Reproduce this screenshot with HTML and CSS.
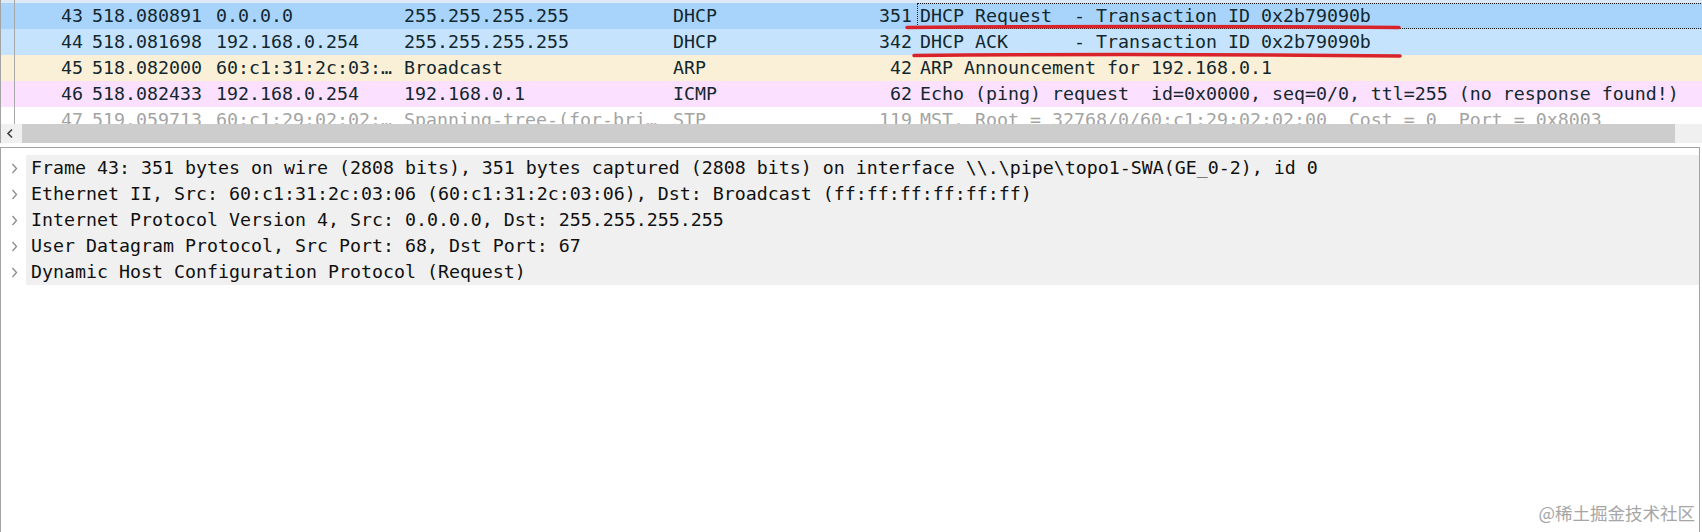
FILE: index.html
```html
<!DOCTYPE html>
<html lang="zh-CN">
<head>
<meta charset="utf-8">
<title>Wireshark</title>
<link rel="stylesheet" href="styles.css">
</head>
<body>
<div class="app">
  <section class="packet-list">
    <div class="related-line"></div>
    <div class="top-strip"></div>
    <div class="row sel">
      <span class="c no">43</span><span class="c time">518.080891</span><span class="c src">0.0.0.0</span><span class="c dst">255.255.255.255</span><span class="c proto">DHCP</span><span class="c len">351</span><span class="c info focus">DHCP Request  - Transaction ID 0x2b79090b</span>
    </div>
    <div class="row udp">
      <span class="c no">44</span><span class="c time">518.081698</span><span class="c src">192.168.0.254</span><span class="c dst">255.255.255.255</span><span class="c proto">DHCP</span><span class="c len">342</span><span class="c info">DHCP ACK      - Transaction ID 0x2b79090b</span>
    </div>
    <div class="row arp">
      <span class="c no">45</span><span class="c time">518.082000</span><span class="c src">60:c1:31:2c:03:…</span><span class="c dst">Broadcast</span><span class="c proto">ARP</span><span class="c len">42</span><span class="c info">ARP Announcement for 192.168.0.1</span>
    </div>
    <div class="row icmp">
      <span class="c no">46</span><span class="c time">518.082433</span><span class="c src">192.168.0.254</span><span class="c dst">192.168.0.1</span><span class="c proto">ICMP</span><span class="c len">62</span><span class="c info">Echo (ping) request  id=0x0000, seq=0/0, ttl=255 (no response found!)</span>
    </div>
    <div class="row-cut">
      <div class="row stp">
        <span class="c no">47</span><span class="c time">519.059713</span><span class="c src">60:c1:29:02:02:…</span><span class="c dst">Spanning-tree-(for-bri…</span><span class="c proto">STP</span><span class="c len">119</span><span class="c info">MST. Root = 32768/0/60:c1:29:02:02:00  Cost = 0  Port = 0x8003</span>
      </div>
    </div>
    <div class="hscroll">
      <div class="sb-arrow">
        <svg width="8" height="11" viewBox="0 0 8 11"><polyline points="6,1.5 2,5.5 6,9.5" fill="none" stroke="#3c3c3c" stroke-width="1.6"/></svg>
      </div>
      <div class="sb-thumb"></div>
      <div class="sb-rest"></div>
    </div>
  </section>

  <div class="splitter"></div>

  <section class="details">
    <div class="drow"><span class="exp"><svg width="7" height="11" viewBox="0 0 7 11"><polyline points="1.5,1 5.5,5.5 1.5,10" fill="none" stroke="#8c8c8c" stroke-width="1.3"/></svg></span><span class="dtext">Frame 43: 351 bytes on wire (2808 bits), 351 bytes captured (2808 bits) on interface \\.\pipe\topo1-SWA(GE_0-2), id 0</span></div>
    <div class="drow"><span class="exp"><svg width="7" height="11" viewBox="0 0 7 11"><polyline points="1.5,1 5.5,5.5 1.5,10" fill="none" stroke="#8c8c8c" stroke-width="1.3"/></svg></span><span class="dtext">Ethernet II, Src: 60:c1:31:2c:03:06 (60:c1:31:2c:03:06), Dst: Broadcast (ff:ff:ff:ff:ff:ff)</span></div>
    <div class="drow"><span class="exp"><svg width="7" height="11" viewBox="0 0 7 11"><polyline points="1.5,1 5.5,5.5 1.5,10" fill="none" stroke="#8c8c8c" stroke-width="1.3"/></svg></span><span class="dtext">Internet Protocol Version 4, Src: 0.0.0.0, Dst: 255.255.255.255</span></div>
    <div class="drow"><span class="exp"><svg width="7" height="11" viewBox="0 0 7 11"><polyline points="1.5,1 5.5,5.5 1.5,10" fill="none" stroke="#8c8c8c" stroke-width="1.3"/></svg></span><span class="dtext">User Datagram Protocol, Src Port: 68, Dst Port: 67</span></div>
    <div class="drow"><span class="exp"><svg width="7" height="11" viewBox="0 0 7 11"><polyline points="1.5,1 5.5,5.5 1.5,10" fill="none" stroke="#8c8c8c" stroke-width="1.3"/></svg></span><span class="dtext">Dynamic Host Configuration Protocol (Request)</span></div>
  </section>

  <svg class="annot" width="1702" height="532" viewBox="0 0 1702 532">
    <path d="M907,27.5 Q1150,25.5 1399,27.5" fill="none" stroke="#d9232b" stroke-width="3.5" stroke-linecap="round"/>
    <path d="M914,55.5 Q1150,53.5 1400,56" fill="none" stroke="#d9232b" stroke-width="3.5" stroke-linecap="round"/>
  </svg>

  <div class="watermark">@稀土掘金技术社区</div>
</div>
</body>
</html>
```

FILE: styles.css
```css
* { box-sizing: border-box; }

html, body {
  margin: 0;
  padding: 0;
  background: #ffffff;
}

body {
  width: 1702px;
  height: 532px;
  overflow: hidden;
  font-family: "DejaVu Sans Mono", "Liberation Mono", monospace;
  font-size: 18.27px;
  color: #12272e;
}

.app {
  position: relative;
  width: 1702px;
  height: 532px;
  display: flex;
  flex-direction: column;
}

/* ---------- packet list ---------- */
.packet-list {
  position: relative;
  border-left: 1px solid #a3a3a3;
  overflow: hidden;
  flex: none;
}

.related-line {
  position: absolute;
  left: 13px;
  top: 0;
  width: 1px;
  height: 124px;
  background: #a8a8a8;
  z-index: 2;
}

.top-strip {
  height: 3px;
  background: #dde9f4;
}

.row {
  display: grid;
  grid-template-columns: 87px 124px 188px 269px 191px 57px 1000px;
  height: 26px;
  align-items: center;
  white-space: pre;
  line-height: 26px;
}

.c { overflow: hidden; height: 26px; }

.no { text-align: right; padding-right: 5px; }
.time { padding-left: 4px; }
.src { padding-left: 4px; }
.dst { padding-left: 4px; }
.proto { padding-left: 4px; }
.len { text-align: right; padding-right: 5px; }
.info { padding-left: 3px; }

.info.focus {
  border: 1px dotted #1b1b1b;
  line-height: 24px;
  padding-left: 2px;
}

.sel { background: #a8d4fb; }
.udp { background: #c5e3fd; }
.arp { background: #faf0d7; }
.icmp { background: #fce0ff; }
.stp { background: #ffffff; color: #a4a4a4; }

.row-cut {
  height: 17px;
  overflow: hidden;
}

/* ---------- horizontal scrollbar ---------- */
.hscroll {
  display: flex;
  height: 19px;
  background: #f0f0f0;
}

.sb-arrow {
  width: 21px;
  display: flex;
  align-items: center;
  justify-content: center;
  padding-right: 3px;
}

.sb-thumb {
  width: 1653px;
  background: #cdcdcd;
}

.sb-rest { flex: 1; }

.splitter {
  height: 4px;
  flex: none;
}

/* ---------- packet details ---------- */
.details {
  flex: 1;
  margin-right: 2px;
  border-top: 1px solid #a3a3a3;
  border-left: 1px solid #a3a3a3;
  border-right: 1px solid #a3a3a3;
  padding-top: 7px;
}

.drow {
  display: flex;
  height: 26px;
  align-items: stretch;
  white-space: pre;
}

.exp {
  width: 25px;
  flex: none;
  display: flex;
  align-items: center;
  padding-left: 10px;
}

.dtext {
  flex: 1;
  background: #f0f0f0;
  color: #101010;
  padding-left: 5px;
  line-height: 26px;
}

/* ---------- overlays ---------- */
.annot {
  position: absolute;
  left: 0;
  top: 0;
  pointer-events: none;
  z-index: 5;
}

.watermark {
  position: absolute;
  right: 7px;
  bottom: 7px;
  font-family: "Noto Sans CJK SC", "Noto Sans", sans-serif;
  font-size: 17.5px;
  color: #a6a6a6;
  z-index: 5;
}
```
